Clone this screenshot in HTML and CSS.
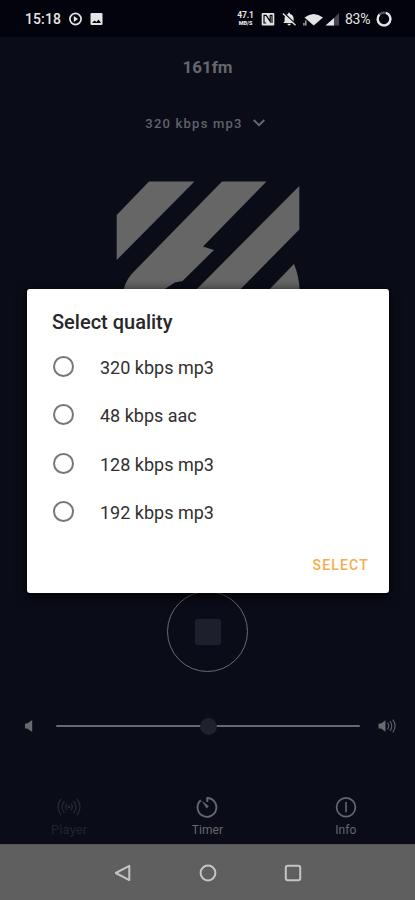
FILE: index.html
```html
<!DOCTYPE html>
<html lang="en">
<head>
<meta charset="utf-8">
<title>161fm</title>
<link rel="stylesheet" href="styles.css">
</head>
<body>
<div class="phone">
  <header class="status">
    <span class="clock">15:18</span>
    <svg class="left-icons" width="36" height="16" viewBox="0 0 36 16">
      <circle cx="7.5" cy="8" r="5.6" fill="none" stroke="#e4e4e4" stroke-width="1.7"/>
      <path d="M5.8 5v6l4.2-3z" fill="#e4e4e4"/>
      <rect x="22.5" y="2" width="12" height="12" rx="1.2" fill="#e4e4e4"/>
      <path d="M24 12l2.500-2.500 2 1.500 2-2.500L33 12z" fill="#03030d"/>
    </svg>
    <span class="speed"><b>47.1</b><small>MB/S</small></span>
    <svg class="right-icons" width="78" height="16" viewBox="0 0 78 16">
      <rect x=".7" y="2" width="12.6" height="12.4" rx="1.2" fill="#e4e4e4"/>
      <path d="M5.2 12H3V4.4h2.2l4 6V4.4H11V12" fill="none" stroke="#03030d" stroke-width="1.2"/>
      <path d="M22.200 12l1.400-1.500V7.300c0-2.400 1.400-4 3.600-4.400V1.800h1.800v1.100c2.200.4 3.600 2 3.600 4.400v3.200l1.400 1.500zM26.300 12.700h3.600q-.3 1.700-1.800 1.700t-1.800-1.700" fill="#e4e4e4"/>
      <path d="M23 2l12.500 12" stroke="#03030d" stroke-width="1.300"/>
      <path d="M21.800 2.500L34.500 14.300" stroke="#e4e4e4" stroke-width="1.300"/>
      <path d="M43.500 6.500q9-7 18.500 0L52.700 14.500z" fill="#e4e4e4"/>
      <path d="M44.800 9.500v5M42.900 12v2.500" stroke="#aaa" stroke-width="1.400"/>
      <path d="M78 2v12.500H65.500z" fill="#454550"/>
      <path d="M73 7v7.500h-8.500z" fill="#e4e4e4"/>
    </svg>
    <span class="percent">83%</span>
    <svg class="battery" width="18" height="18" viewBox="0 0 18 18">
      <circle cx="9" cy="9" r="6.400" fill="none" stroke="#55555c" stroke-width="2.200"/>
      <path d="M11 2.900a6.400 6.400 0 1 1-6.500 1.600" fill="none" stroke="#e4e4e4" stroke-width="2.400"/>
    </svg>
  </header>

  <main class="player">
    <h1 class="station">161fm</h1>
    <div class="quality">
      <span>320 kbps mp3</span>
      <svg width="14" height="10" viewBox="0 0 14 10"><path d="M1.700 2L7 7.200 12.300 2" fill="none" stroke="#696b73" stroke-width="1.800"/></svg>
    </div>
    <svg class="logo" width="184" height="184" viewBox="116 181 184 184">
      <path d="M116.700 215L149 181.500h45.500L116.700 260z"/>
      <path d="M222 181.500h44.500L203 246.500l11 3.500-31.500 31-7.500 1.500-9.500 6-21 21H124v-21q2.500-10 11-18z"/>
      <path d="M299.300 186v43.500L219 311h-44z"/>
      <path d="M294 264q5 12 5.500 25v22h-51z"/>
    </svg>
    <div class="play"><i class="stop"></i></div>
    <div class="volume">
      <svg class="quiet" width="10" height="14" viewBox="0 0 10 14"><path d="M1 4.500h2.200L8.200 1v12L3.200 9.500H1z" fill="#696a6c"/></svg>
      <div class="track"><i class="knob"></i></div>
      <svg class="loud" width="20" height="16" viewBox="0 0 20 16">
        <path d="M.5 5.500H3L7.500 2.200v11.600L3 10.500H.5z" fill="#696a6c"/>
        <path d="M9.500 4.700q2.500 3.300 0 6.600M12 3.200q3.500 4.800 0 9.600M14.800 1.700q4.500 6.300 0 12.600" fill="none" stroke="#5c5d61" stroke-width="1.200"/>
      </svg>
    </div>
    <nav class="tabs">
      <div class="tab active">
        <svg width="26" height="24" viewBox="0 0 26 24"><g fill="none" stroke="#262832" stroke-width="1.300"><path d="M5 4q-6 8 0 16M8.500 6q-5 6 0 12M21 4q6 8 0 16M17.500 6q5 6 0 12M10.800 8.700q-2 3.300 0 6.600M15.200 8.700q2 3.300 0 6.600"/></g><circle cx="13" cy="12" r="1.400" fill="#262832"/></svg>
        <span>Player</span>
      </div>
      <div class="tab">
        <svg width="26" height="24" viewBox="0 0 26 24"><path d="M13.300 7V3A9.400 9.400 0 1 1 6.800 5.300" fill="none" stroke="#67686b" stroke-width="1.900"/><path d="M7.500 5.500l7.300 5.800-2.100 2.100z" fill="#67686b"/></svg>
        <span>Timer</span>
      </div>
      <div class="tab">
        <svg width="26" height="24" viewBox="0 0 26 24"><circle cx="13" cy="12.200" r="9.400" fill="none" stroke="#67686b" stroke-width="1.700"/><path d="M13 7v10.300" stroke="#67686b" stroke-width="1.600"/></svg>
        <span>Info</span>
      </div>
    </nav>
  </main>

  <footer class="system">
    <svg width="20" height="20" viewBox="0 0 20 20"><path d="M16.300 2.900v14.200L2.800 10z"/></svg>
    <svg width="20" height="20" viewBox="0 0 20 20"><circle cx="10" cy="10" r="7.400"/></svg>
    <svg width="20" height="20" viewBox="0 0 20 20"><rect x="2.800" y="2.800" width="14.400" height="14.400" rx="2"/></svg>
  </footer>

  <section class="dialog">
    <h2>Select quality</h2>
    <div class="options">
      <label><i></i><span>320 kbps mp3</span></label>
      <label><i></i><span>48 kbps aac</span></label>
      <label><i></i><span>128 kbps mp3</span></label>
      <label><i></i><span>192 kbps mp3</span></label>
    </div>
    <div class="actions"><button>SELECT</button></div>
  </section>
</div>
</body>
</html>
```
FILE: styles.css
```css
* { box-sizing: border-box; }
body { margin: 0; font-family: Roboto, "Liberation Sans", sans-serif; }
svg { display: block; flex: none; }
.phone {
  position: relative;
  width: 415px;
  height: 900px;
  overflow: hidden;
  display: flex;
  flex-direction: column;
  background: #0a0c18;
}
.status {
  height: 37px;
  flex: none;
  display: flex;
  align-items: center;
  padding-left: 25px;
  background: #03030d;
  color: #e4e4e4;
}
.clock { width: 43px; font-size: 14px; font-weight: 500; letter-spacing: .1px; }
.left-icons { margin-right: 132px; }
.speed { width: 19px; display: flex; flex-direction: column; align-items: center; margin-right: 6px; }
.speed b { font-size: 8.500px; line-height: 10px; font-weight: 700; letter-spacing: -.1px; }
.speed small { font-size: 5.500px; font-weight: 900; line-height: 7px; }
.percent { width: 30px; margin-left: 6px; font-size: 14px; font-weight: 400; letter-spacing: -.3px; }
.player { height: 807px; flex: none; display: flex; flex-direction: column; align-items: center; }
.station { margin: 17px 0 0; height: 26px; line-height: 26px; font-size: 17px; font-weight: 700; color: #66676b; letter-spacing: 0; }
.quality { display: flex; align-items: center; gap: 9px; height: 20px; margin: 33px 0 0; padding-right: 4px; color: #626369; font-size: 13px; font-weight: 500; letter-spacing: 1.220px; }
.logo { margin-top: 48px; fill: #666; }
.play { width: 81px; height: 81px; margin-top: 226px; border: 1px solid #6a6b6d; border-radius: 50%; display: flex; align-items: center; justify-content: center; flex: none; }
.stop { width: 26px; height: 26px; border-radius: 3px; background: #1d1f2c; }
.volume { width: 100%; height: 20px; margin-top: 44px; display: flex; align-items: center; padding-left: 24px; flex: none; }
.track { width: 304px; height: 2px; margin: 0 18px 0 22px; background: #68696b; border-radius: 1px; display: flex; align-items: center; justify-content: center; }
.knob { width: 17px; height: 17px; border-radius: 50%; background: #1f212d; flex: none; }
.tabs { width: 100%; margin-top: 59px; display: grid; grid-template-columns: repeat(3, 1fr); }
.tab { display: flex; flex-direction: column; align-items: center; color: #67686b; font-size: 12px; line-height: 16px; letter-spacing: .1px; gap: 3px; font-weight: 400; }
.active { color: #22242e; font-size: 13px; }
.system { height: 56px; flex: none; border-top: 1px solid #555; background: #5f5f5f; display: flex; justify-content: center; align-items: center; gap: 65px; }
.system svg { fill: none; stroke: #c4c4c4; stroke-width: 2; stroke-linejoin: round; }
.dialog {
  position: absolute;
  left: 27px;
  top: 289px;
  width: 362px;
  height: 304px;
  padding: 20px 14px 0 25px;
  background: #fff;
  border-radius: 3px;
  color: #303030;
  box-shadow: 0 3px 12px #000;
}
.dialog h2 { margin: 0; height: 26px; line-height: 26px; font-size: 20px; font-weight: 500; color: #282828; }
.options { display: flex; flex-direction: column; margin-top: 7px; }
.options label { display: flex; align-items: center; height: 48.500px; padding-left: 1px; gap: 26px; font-size: 18px; }
.options span { padding-top: 2px; }
.options i { width: 21px; height: 21px; border: 2px solid #777; border-radius: 50%; }
.actions { display: flex; justify-content: flex-end; margin-top: 14px; }
button { border: 0; margin: 0; padding: 6px; background: none; font: 500 14px/18px Roboto, sans-serif; letter-spacing: 1.200px; color: #f4ae4d; }
```
